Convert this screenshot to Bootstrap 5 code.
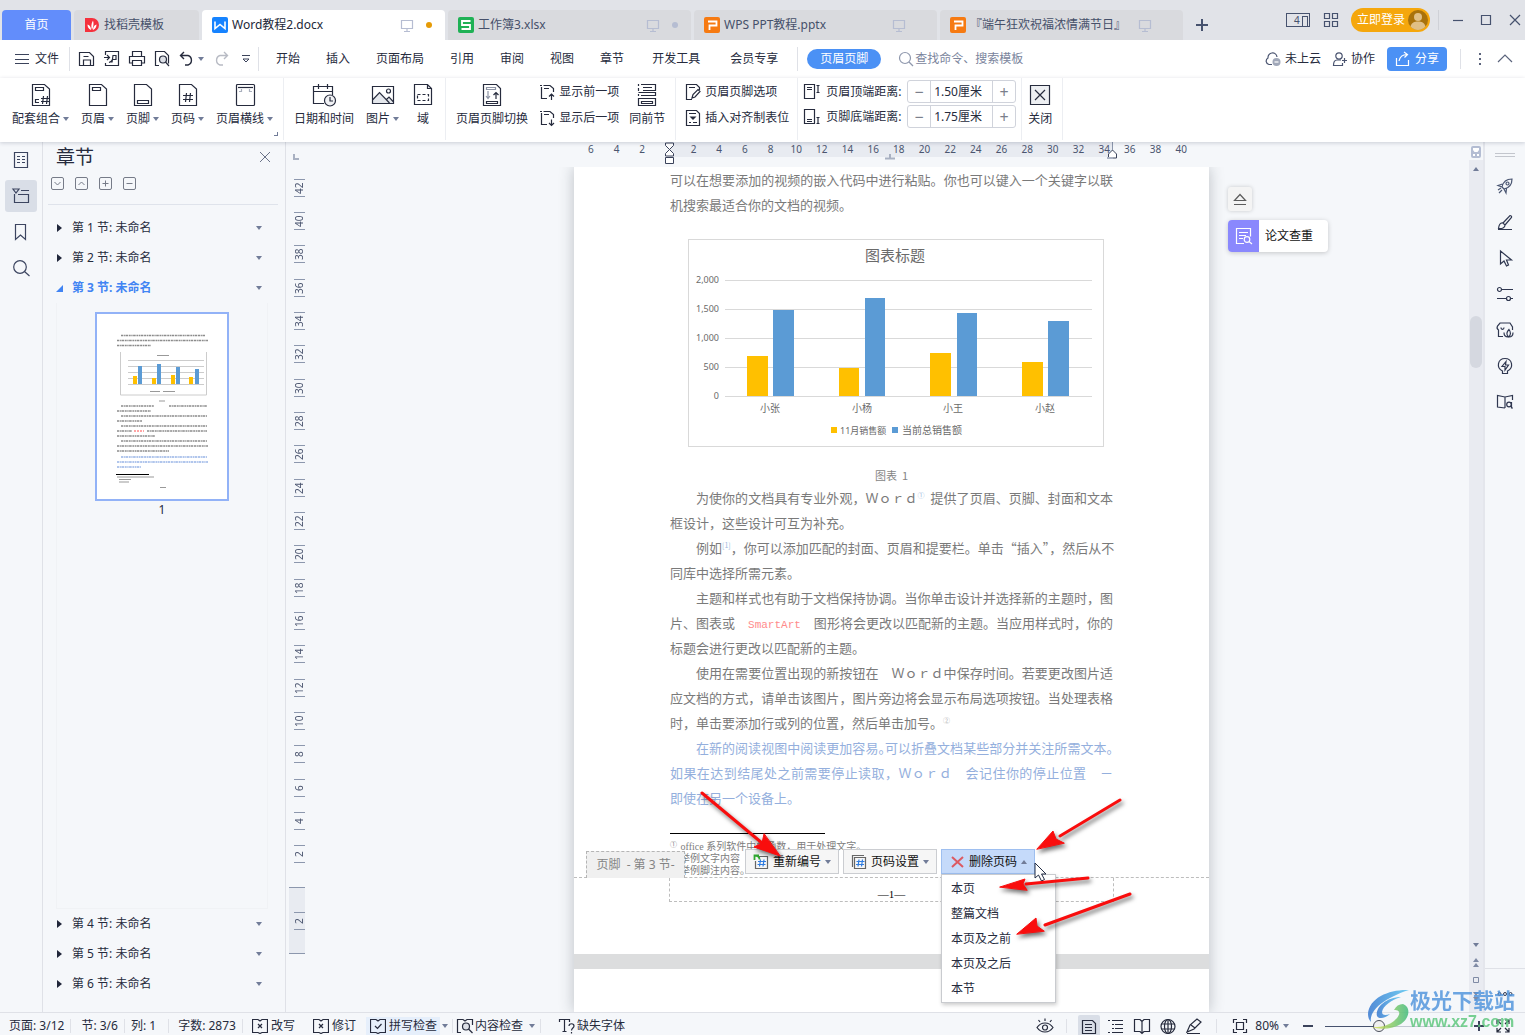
<!DOCTYPE html>
<html lang="zh-CN">
<head>
<meta charset="utf-8">
<meta name="viewport" content="width=device-width, initial-scale=1">
<title>Word教程2.docx</title>
<link href="https://cdn.jsdelivr.net/npm/bootstrap@5.3.0/dist/css/bootstrap.min.css" rel="stylesheet">
<style>
:root{--ink:#262b3d;--slate:#4a5672;--line:#dfe1e7;--blue:#4b91f5;--bg:#f5f7fa}
body{font-family:"Noto Sans","Noto Sans CJK SC",sans-serif;font-size:12px;line-height:18px;color:var(--ink);background:var(--bg);height:100vh;overflow:hidden}
svg{display:block;flex:none;overflow:visible}
.ic{width:16px;height:16px;fill:none;stroke:currentColor;stroke-width:1.2}
.ic24{width:24px;height:24px;fill:none;stroke:currentColor;stroke-width:1.2}
.plain{display:flex;align-items:center;padding:0;border:0;background:none;color:inherit;font-size:12px;line-height:18px;white-space:nowrap;text-decoration:none;border-radius:0}
.plain:hover{color:inherit}
.tri{width:0;height:0;border:3px solid transparent;border-top:4px solid #717c98;border-bottom:0;flex:none}
.tri-up{border-top:0;border-bottom:4px solid #717c98}
.vsep{width:1px;background:var(--line);flex:none}
/* title bar */
.titlebar{height:40px;background:#e1e3e8}
.doctab{height:30px;background:#d9dade;border-radius:4px 4px 0 0;padding:0 13px 0 10px;gap:4px;color:#46506a;width:243px}
.doctab.home{width:69px;background:#628dfb;color:#fff;justify-content:center;padding:0}
.doctab.shop{width:125px}
.doctab.current{background:#fff;color:#222738}
.doctab .ic{color:#b6bdd2}
.doctab .dot{width:6px;height:6px;border-radius:50%;margin-left:7px;background:#b6bdd2}
.doctab.current .dot{background:#e69b06}
.doctab .dot.off{visibility:hidden}
.login{height:24px;border-radius:12px;background:#f5a70c;color:#fff;padding:0 2px 0 6px;gap:3px}
/* menu row */
.menurow{height:38px;background:#fff;padding:0 12px 0 15px}
.menurow .vsep{height:24px}
.mtab{padding:0 13px}
.mtab.wide{padding:0 15px}
.mtab.pill{height:20px;border-radius:10px;background:var(--blue);color:#fff}
.find{border:0;outline:0;background:none;width:130px;padding:0;color:#7a849c;font-size:12px;line-height:18px}
.find::placeholder{color:#7a849c;opacity:1}
.share{height:24px;border-radius:4px;background:var(--blue);color:#fff;padding:0 8px;gap:4px}
/* ribbon */
.ribbon{height:64px;background:#fff;padding-left:6px;box-shadow:0 1px 4px rgba(30,40,70,.2);z-index:5;position:relative}
.ribbon .vsep{height:62px;background:#eceef2}
.rgroup{padding-right:4px}
.rgroup+.vsep+.rgroup{padding-left:4px}
.rbtn{flex-direction:column;padding:5px 6px 0;gap:3px;min-width:34px}
.rbtn .cap{display:flex;align-items:center;gap:3px}
.sbtn{padding:0 4px 0 6px;gap:5px;height:26px}
.sbtn .ic{width:14px}
.fieldlabel{width:75px;white-space:nowrap}
.spin{height:23px;width:109px;border:1px solid #d0d3db;border-radius:3px;overflow:hidden}
.spin button{width:22px;justify-content:center;font-size:16px;color:#7b7f8c}
.spin input{flex:1;min-width:0;border:0;border-left:1px solid #d0d3db;border-right:1px solid #d0d3db;font-size:12px;line-height:18px;padding:0 3px;color:var(--ink);outline:0}
.launch{width:4px;height:4px;border-right:1px solid #717c98;border-bottom:1px solid #717c98;left:274px;top:54px}
/* work area */
.rail{width:43px;border-right:1px solid var(--line);padding:2px 5px;gap:4px}
.rail .plain{width:32px;height:32px;justify-content:center;border-radius:3px;color:#3c4560}
.rail .on{background:#d9dee7}
.secpane{width:243px;border-right:1px solid var(--line)}
.secpane h2{font-size:19px;line-height:30px;margin:0;font-weight:400}
.boxbtn{width:13px;height:13px;border:1px solid #767b88;border-radius:2px;justify-content:center;color:#767b88}
.boxbtn svg{width:9px;height:9px;fill:none;stroke:currentColor}
.secrow{height:30px;padding:0 23px 0 14px;width:100%}
.secrow .mark-r{width:15px;flex:none}
.secrow .mark-r i{display:block;width:0;height:0;border:4px solid transparent;border-left:5px solid #20263a;border-right:0}
.secrow.cur{color:#4184f3;font-weight:700}
.secrow.cur .mark-r i{border:0;border-left:7px solid transparent;border-bottom:7px solid #4184f3;margin-left:-1px}
.thumbs{margin:0 17px 0 13px;border:1px solid #f0f2f5;border-top:0}
.thumb{width:134px;height:189px;border:2px solid #92b2f7;background:#fff;margin-top:9px}
.hrule{height:25px}
.hrule-in{width:635px;padding:0 15px 0 4px;display:grid;grid-template-columns:repeat(24,1fr);font-size:10px;line-height:15px;text-align:center;color:#4b556f;position:relative;height:15px}
.hrule-in span{position:relative}
.hband{position:absolute;left:96px;right:96px;top:0;height:15px;background:#e8ebf1;border-right:1px solid #8c97ad}
.hmark{position:absolute;left:0;top:0;width:100%;height:25px}
.vrule{width:28px;padding:4px 9px 0 3px}
.vnums{display:grid;grid-template-rows:repeat(21,1fr);height:700px}
.vnum{display:flex;align-items:center;justify-content:flex-end}
.vnum span{writing-mode:vertical-rl;transform:rotate(180deg);font-size:10px;line-height:11px;width:11px;height:18px;text-align:center;border-top:1px solid #8c97ad;border-bottom:1px solid #8c97ad;color:#4b556f}
.vfoot{height:67px;margin-top:16px;background:#e8ebf1;border-top:1px solid #8c97ad;border-bottom:1px solid #8c97ad}
.sheets{width:635px;box-shadow:0 0 14px rgba(40,50,60,.28)}
.sheet{height:787px;background:#fff;padding:0 96px;position:relative;overflow:visible}
.sheetgap{height:15px;background:#dcddde}
.doc{font:13px/25px "Noto Sans CJK SC",sans-serif;color:#7a7a7a;margin:0;white-space:nowrap}
.doc span{display:block}
.doc .full{text-align-last:justify}
.doc .ind{padding-left:26px}
.doc .tight{font-feature-settings:"halt"}
.doc sup{font-size:7px;line-height:0;color:#9db8dc;top:-5px}
.doc sup.grey{color:#b5b5b5}
.doc em{font:11px "Liberation Mono",monospace;color:#ff8b8b}
.doc.bluepar{color:#94afdd}
.chartbox{width:416px;height:208px;border:1px solid #d9d9d9;margin:22px 0 0 18px}
.chartbox text{font-family:"Noto Sans","Noto Sans CJK SC",sans-serif;fill:#6a6a6a;font-size:9px}
.figcap{font:11px/20px "Noto Sans CJK SC",sans-serif;color:#858585;text-align:center;margin:18px 0 0}
.fnotes{font:10px/12px "Liberation Serif","Noto Sans CJK SC",serif;color:#7d7d7d;white-space:nowrap}
.fnotes hr{width:155px;margin:23px 0 5px;border-top:1px solid #000;opacity:1}
.fnotes .fmark{font-size:7px;vertical-align:3px;padding-right:1px}
.fnotes .fcont{padding-left:10px}
.footzone{position:absolute;left:0;right:0;top:710px;border-top:1px dashed #bdbdbd}
.footbox{margin:0 95px;height:24px;border:1px dashed #bdbdbd;border-top:0;font:11px/33px "Liberation Serif",serif;color:#000;text-align:center}
.foottag{position:absolute;left:12px;bottom:0;width:99px;height:27px;background:#f0f0f0;border:1px dashed #b5b5b5;border-bottom:0;color:#848484;line-height:26px;text-align:center;white-space:pre}
.foottools{position:absolute;left:171px;bottom:4px;gap:4px}
.foottools .ftb{width:94px;height:25px;background:#f6f6f6;border:1px solid #cbcdd1;padding:0 7px;gap:4px;color:#111;border-radius:0}
.foottools .ftb.open{background:#c5dafa;border-color:#9ebff0}
.pmenu{position:absolute;display:block;left:196px;top:25px;min-width:0;width:115px;padding:1px 0;margin:0;border:1px solid #c9cbcf;border-radius:0;box-shadow:1px 2px 4px rgba(0,0,0,.2);font-size:12px;z-index:2}
.pmenu .dropdown-item{padding:0 9px;line-height:25px;color:var(--ink)}
.overlay{position:absolute;left:0;top:0;width:100%;height:100%;z-index:4;pointer-events:none}
.floaters{position:absolute;right:141px;top:45px;width:100px;gap:9px}
.eject{width:24px;height:24px;background:#f4f4f4;border-radius:3px;box-shadow:0 0 4px rgba(0,0,0,.18);justify-content:center;color:#5c5c5c}
.paper{height:32px;background:#fff;border-radius:4px;box-shadow:0 1px 5px rgba(0,0,0,.2);color:#111;overflow:hidden;gap:6px}
.paper b{width:31px;height:32px;background:#8a88fd;color:#fff;display:flex;align-items:center;justify-content:center}
.sbar{width:16px;border-right:2px solid #e4e6ec}
.sbar .track{background:#e9ebf1;flex:1;position:relative}
.sbar .knob{position:absolute;top:156px;left:1px;right:1px;height:52px;border-radius:6px;background:#d5d8e0}
.toolrail{width:40px}
.toolrail .plain{height:36px;justify-content:center;color:#2f3750}
/* status bar */
.status{height:23px;border-top:1px solid var(--line);padding:4px 14px 0 9px}
.status .vsep{height:14px}
.status .chk{background:#e6effb;padding:0 3px 0 4px}
.status .sel{background:#d9dee7;border-radius:2px;padding:0 3px;height:24px;margin-top:1px}
.zoomer{appearance:none;-webkit-appearance:none;width:137px;height:16px;background:linear-gradient(90deg,#46526e 40%,#c3c8d3 40%) center/100% 1px no-repeat;margin:0}
.zoomer::-webkit-slider-thumb{-webkit-appearance:none;width:12px;height:12px;border-radius:50%;border:1px solid #4b4f5c;background:#f0f0f0}
.wmark{position:fixed;right:10px;bottom:4px;z-index:9;opacity:.82;pointer-events:none}
.wmark .w1{font-size:21px;line-height:25px;font-weight:700;color:#4f93dc}
.wmark .w2{font:700 16px/18px "Liberation Sans",sans-serif;color:#5cc67c}
</style>
<script src="https://cdn.jsdelivr.net/npm/bootstrap@5.3.0/dist/js/bootstrap.bundle.min.js"></script>
</head>
<body class="d-flex flex-column">
<svg width="0" height="0" class="position-absolute" aria-hidden="true">
<symbol id="mon" viewBox="0 0 16 16"><path d="M2.500 3.500h11v8h-11zM8 11.500v3M5 14.500h6"/></symbol>
<symbol id="pgh" viewBox="0 0 24 24"><path d="M3.500 1.500h12l5 4.500v16.500h-17zM6.500 4.500h8v3h-8z"/></symbol>
<symbol id="wI" viewBox="0 0 16 16"><rect width="16" height="16" rx="2" fill="#1683ff" stroke="none"/><path d="M3 4.500v7l5-4 5 4v-7" stroke="#fff" stroke-width="1.600"/></symbol>
<symbol id="pI" viewBox="0 0 16 16"><rect width="16" height="16" rx="2" fill="#f67a12" stroke="none"/><path d="M4 4.500h8.500v4H5.500V13" stroke="#fff" stroke-width="1.800"/></symbol>
<symbol id="chkbox" viewBox="0 0 16 16"><path d="M6 1.500H.5v13H6l2 1 2-1h5.500v-13H10L8 3 6 1.500"/></symbol>
</svg>

<header class="titlebar d-flex align-items-center flex-shrink-0">
  <nav class="d-flex align-self-end align-items-center" style="gap:3px;padding-left:2px">
    <a href="#" class="plain doctab home">首页</a>
    <a href="#" class="plain doctab shop"><svg class="ic" viewBox="0 0 16 16"><path d="M1 1h7a7 7 0 0 1 0 14H1z" fill="#f5313d" stroke="none"/><path d="M8 13C7 10 7 7 9 3.500c1 3 .5 6-1 9.500zM7 13C4.500 12 3.500 10 3.500 7.500 6 8.500 7 10 7 13zM9 13c0-3 1-4.500 3.500-5.500 0 2.500-1 4.500-3.500 5.500z" fill="#fff" stroke="none"/></svg>找稻壳模板</a>
    <a href="#" class="plain doctab current"><svg class="ic"><use href="#wI"/></svg><span class="flex-grow-1">Word教程2.docx</span><svg class="ic"><use href="#mon"/></svg><span class="dot"></span></a>
    <a href="#" class="plain doctab"><svg class="ic" viewBox="0 0 16 16"><rect width="16" height="16" rx="2" fill="#1fb155" stroke="none"/><path d="M12.500 4H4v4h8v4H3.500" stroke="#fff" stroke-width="1.800"/></svg><span class="flex-grow-1">工作簿3.xlsx</span><svg class="ic"><use href="#mon"/></svg><span class="dot"></span></a>
    <a href="#" class="plain doctab"><svg class="ic"><use href="#pI"/></svg><span class="flex-grow-1">WPS PPT教程.pptx</span><svg class="ic"><use href="#mon"/></svg><span class="dot off"></span></a>
    <a href="#" class="plain doctab"><svg class="ic"><use href="#pI"/></svg><span class="flex-grow-1">『端午狂欢祝福浓情满节日』</span><svg class="ic"><use href="#mon"/></svg><span class="dot off"></span></a>
    <button class="plain ms-2" aria-label="新建" style="color:#46526e"><svg class="ic" viewBox="0 0 16 16"><path d="M8 2v12M2 8h12" stroke-width="2"/></svg></button>
  </nav>
  <div class="d-flex align-items-center ms-auto" style="padding-right:2px;color:#46526e">
    <button class="plain" aria-label="视图"><svg width="25" height="15" fill="none" stroke="#46526e"><rect x=".5" y=".5" width="23" height="13"/><rect x="16.500" y="3.500" width="5" height="10"/><text x="8" y="11" font-size="10" fill="#46526e" stroke="none">4</text></svg></button>
    <button class="plain" style="margin-left:12px" aria-label="应用"><svg class="ic" viewBox="0 0 16 16"><path d="M1.500 1.500h5v5h-5zM9.500 1.500h5v5h-5zM1.500 9.500h5v5h-5zM9.500 9.500h5v5h-5z"/></svg></button>
    <button class="plain login" style="margin-left:12px">立即登录<svg width="20" height="20" viewBox="0 0 20 20"><circle cx="10" cy="10" r="10" fill="#a9720b"/><circle cx="10" cy="7" r="4" fill="#e0bf85"/><path d="M2.500 16.500c1-4 4-5 7.500-5s6.500 1 7.500 5A10 10 0 0 1 2.500 16.500z" fill="#e0bf85"/></svg></button>
    <span class="vsep" style="height:20px;margin:0 11px 0 8px;background:#cfd1d7"></span>
    <button class="plain" aria-label="最小化"><svg class="ic" viewBox="0 0 16 16"><path d="M3 8.500h10"/></svg></button>
    <button class="plain" style="margin-left:12px" aria-label="最大化"><svg class="ic" viewBox="0 0 16 16"><path d="M3.500 3.500h9v9h-9z"/></svg></button>
    <button class="plain" style="margin-left:13px" aria-label="关闭窗口"><svg class="ic" viewBox="0 0 16 16"><path d="M3 3l10 10M13 3L3 13"/></svg></button>
  </div>
</header>

<div class="menurow d-flex align-items-center flex-shrink-0">
  <button class="plain" style="gap:6px"><svg width="14" height="14" stroke="#3b435b"><path d="M0 2.500h14M0 7.500h14M0 11.500h14"/></svg>文件</button>
  <span class="vsep" style="margin:0 9px 0 10px"></span>
  <div class="d-flex align-items-center" style="gap:9px">
    <button class="plain" aria-label="保存"><svg class="ic" viewBox="0 0 16 16"><path d="M.5 1.500h10l4 4v9H.5zM4.500 14v-5h7v5M4.500 5.500h5"/></svg></button>
    <button class="plain" aria-label="输出PDF"><svg class="ic" viewBox="0 0 16 16"><path d="M1.500 4V.5h13v14h-13V12M0 6.500h5M3 4l2.500 2.500L3 9M8 11.500l1-7h3v4H8.500C8 10 6.500 11 5 11.500"/></svg></button>
    <button class="plain" aria-label="打印"><svg class="ic" viewBox="0 0 16 16"><path d="M3.500 5V.5h9V5M3.500 12h-3V5.500h15V12h-3M3.500 9.500h9v5h-9z"/></svg></button>
    <button class="plain" aria-label="打印预览"><svg class="ic" viewBox="0 0 16 16"><path d="M5 14.500H1.500V.5h9l4 4v8"/><circle cx="9" cy="8.500" r="3.500" fill="#dcdfe6"/><path d="M11.500 11l3.500 4"/></svg></button>
    <button class="plain" style="gap:3px" aria-label="撤销"><svg class="ic" viewBox="0 0 16 16"><path d="M5 1L1.500 4.500 5 8M2 4.500h7a5 5 0 0 1 0 9.500H6" stroke-width="1.400"/></svg><i class="tri"></i></button>
    <button class="plain" aria-label="恢复" style="color:#b8bbc4"><svg class="ic" viewBox="0 0 16 16"><path d="M11 1l3.500 3.500L11 8M14 4.500H7A5 5 0 0 0 7 14h3" stroke-width="1.400"/></svg></button>
    <button class="plain ms-1" aria-label="更多"><svg width="8" height="8" fill="none" stroke="#3b435b"><path d="M0 .5h8M1 4l3 3 3-3z"/></svg></button>
  </div>
  <span class="vsep" style="margin:0 4px 0 8px"></span>
  <nav class="d-flex align-items-center">
    <a href="#" class="plain mtab">开始</a><a href="#" class="plain mtab">插入</a><a href="#" class="plain mtab">页面布局</a><a href="#" class="plain mtab">引用</a><a href="#" class="plain mtab">审阅</a><a href="#" class="plain mtab">视图</a><a href="#" class="plain mtab">章节</a><a href="#" class="plain mtab wide">开发工具</a><a href="#" class="plain mtab wide">会员专享</a>
    <span class="vsep" style="margin:0 9px 0 4px"></span>
    <a href="#" class="plain mtab pill">页眉页脚</a>
  </nav>
  <label class="d-flex align-items-center" style="margin-left:17px;gap:1px;color:#8f98ad"><svg class="ic" viewBox="0 0 16 16"><circle cx="7" cy="7" r="5.500"/><path d="M11 11l4 4"/></svg><input class="find" placeholder="查找命令、搜索模板" aria-label="查找命令"></label>
  <div class="d-flex align-items-center ms-auto">
    <button class="plain" style="gap:4px"><svg class="ic" viewBox="0 0 16 16" style="color:#4a5470"><path d="M7 13.500H4A3.500 3.500 0 0 1 3 7 4.500 4.500 0 0 1 12 6"/><circle cx="11.500" cy="11" r="4" fill="#a1a8b9" stroke="none"/><path d="M9.500 11h4" stroke="#fff"/></svg>未上云</button>
    <button class="plain" style="gap:3px;margin-left:11px"><svg class="ic" viewBox="0 0 16 16" style="color:#4a5470"><circle cx="7" cy="5" r="3.200"/><path d="M9 9H5c-2 0-3.500 1.500-3.500 5.500h9V12M10 9.500h5M12.500 7v5"/></svg>协作</button>
    <button class="plain share" style="margin-left:12px"><svg class="ic" viewBox="0 0 16 16"><path d="M1.500 7v7.500h12V9M4 10c1-5 4-6.500 8-6.500M9 1l3.500 2.500L9.500 6.500"/></svg>分享</button>
    <span class="vsep" style="margin:0 17px 0 13px;height:20px"></span>
    <button class="plain" aria-label="选项"><svg width="4" height="14" fill="#5b647c"><path d="M1 1h2v2H1zM1 6h2v2H1zM1 11h2v2H1z"/></svg></button>
    <button class="plain" style="margin-left:15px" aria-label="折叠功能区"><svg class="ic" viewBox="0 0 16 16"><path d="M1 11l7-7 7 7" stroke="#5b647c"/></svg></button>
  </div>
</div>

<div class="ribbon d-flex flex-shrink-0">
  <div class="rgroup d-flex">
    <button class="plain rbtn"><svg class="ic24" viewBox="0 0 24 24"><path d="M3.500 1.500h12l5 4.500v16.500h-17zM6.500 4.500h8v3h-8zM10 16.500H6.500v3H10M12 15.500h8M12 18.500h8M14.500 13l-1 8M18.500 13l-1 8"/></svg><span class="cap">配套组合<i class="tri"></i></span></button>
    <button class="plain rbtn"><svg class="ic24"><use href="#pgh"/></svg><span class="cap">页眉<i class="tri"></i></span></button>
    <button class="plain rbtn"><svg class="ic24" viewBox="0 0 24 24"><path d="M3.500 1.500h12l5 4.500v16.500h-17zM6.500 17.500h11v3h-11z"/></svg><span class="cap">页脚<i class="tri"></i></span></button>
    <button class="plain rbtn"><svg class="ic24" viewBox="0 0 24 24"><path d="M3.500 1.500h12l5 4.500v16.500h-17zM7 12.500h10M7 16.500h10M10.500 10l-1 9M14.500 10l-1 9"/></svg><span class="cap">页码<i class="tri"></i></span></button>
    <button class="plain rbtn"><svg class="ic24" viewBox="0 0 24 24"><rect x="3.500" y="1.500" width="18" height="21" rx="1"/><path d="M5 4.500h15"/><path d="M6 8.500h2.500V6M19 8.500h-2.500V6" stroke="#a9afbd"/></svg><span class="cap">页眉横线<i class="tri"></i></span></button>
    <span class="launch position-absolute"></span>
  </div>
  <span class="vsep"></span>
  <div class="rgroup d-flex">
    <button class="plain rbtn"><svg class="ic24" viewBox="0 0 24 24"><path d="M12 20.500H1.500v-17h19V12M1.500 8.500h19M6.500 1v5M15.500 1v5"/><circle cx="18" cy="17.500" r="5.500" fill="#f1f2f5"/><path d="M18 14v4h3"/></svg><span>日期和时间</span></button>
    <button class="plain rbtn"><svg class="ic24" viewBox="0 0 24 24"><path d="M1.500 18l7-8 7 8 2.500-3 4.500 5.500h-21z" fill="#e4e7ec" stroke="none"/><path d="M1.500 3.500h21v17h-21zM1.500 17l7-7.500 10 10.500M15.500 16.500l2.500-2.500 4.500 5"/><circle cx="17.500" cy="8" r="2"/></svg><span class="cap">图片<i class="tri"></i></span></button>
    <button class="plain rbtn"><svg class="ic24" viewBox="0 0 24 24"><path d="M3.500 1.500h13l4 4v16h-17zM16.500 1.500v4h4"/><path d="M6.500 11.500h11v6h-11z" stroke-dasharray="3 2"/></svg><span>域</span></button>
  </div>
  <span class="vsep"></span>
  <div class="rgroup d-flex">
    <button class="plain rbtn"><svg class="ic24" viewBox="0 0 24 24"><path d="M3.500 1.500h13l4 4v17h-17zM6.500 18.500h11v2h-11z"/><path d="M6.500 4.500h9v2h-9zM8 8v7M6 13l2 2.500 2-2.500" stroke="#8e95a6"/><path d="M16 16V9.500M13.500 12L16 9.500l2.500 2.500"/></svg><span>页眉页脚切换</span></button>
    <div class="d-flex flex-column">
      <button class="plain sbtn" style="margin-top:1px"><svg class="ic" viewBox="0 0 14 16"><path d="M3.500 1.500H10l3.500 3V8M1.500 3v11.500H7M0 1.500h2M4 4.500h5M11.500 16v-6M9 12.500l2.500-2.500 2.500 2.500"/></svg>显示前一项</button>
      <button class="plain sbtn"><svg class="ic" viewBox="0 0 14 16"><path d="M3.500 1.500H10l3.500 3V8M1.500 3v11.500H7M0 1.500h2M4 4.500h5M11.500 9.500v6M9 13l2.500 2.500L14 13"/></svg>显示后一项</button>
    </div>
    <button class="plain rbtn"><svg class="ic24" viewBox="0 0 24 24"><path d="M6 1.500h14.500v6H8M3.500 1v2M3.500 5v3M8 4.500h9M3.500 9.500h17v3H6M3.500 11v2M3.500 15.500h17v7h-17zM6.500 18.500h11v2h-11z"/></svg><span>同前节</span></button>
  </div>
  <span class="vsep"></span>
  <div class="rgroup d-flex flex-column">
    <button class="plain sbtn" style="margin-top:1px"><svg class="ic" viewBox="0 0 14 16"><path d="M6 15.500H.5V.5h10l3 3V6M3 3.500h6M6 14l1-3.500 5-5 2 2-5 5.500z"/></svg>页眉页脚选项</button>
    <button class="plain sbtn"><svg class="ic" viewBox="0 0 14 16"><path d="M.5.5h10l3 3v12H.5zM3 3.500h7M3 12.500h2M7 12.500h4"/><path d="M3.500 6.500h7L7 10z" fill="currentColor" stroke="none"/></svg>插入对齐制表位</button>
  </div>
  <span class="vsep"></span>
  <div class="d-flex flex-column" style="padding:2px 5px 0 6px;gap:2px">
    <div class="d-flex align-items-center" style="gap:6px"><svg class="ic" viewBox="0 0 16 16"><path d="M.5.5h10v14H.5zM3 3.500h5M3 5.500h5M12.500 1.500h3M14 1.500v7M12.500 8.500h3"/></svg><label for="hd" class="fieldlabel">页眉顶端距离:</label><div class="spin d-flex"><button class="plain" aria-label="减">−</button><input id="hd" value="1.50厘米"><button class="plain" aria-label="加">+</button></div></div>
    <div class="d-flex align-items-center" style="gap:6px"><svg class="ic" viewBox="0 0 16 16"><path d="M.5.5h10v14H.5zM3 10.500h5M3 12.500h5M12.500 8.500h3M14 8.500v6M12.500 14.500h3"/></svg><label for="fd" class="fieldlabel">页脚底端距离:</label><div class="spin d-flex"><button class="plain" aria-label="减">−</button><input id="fd" value="1.75厘米"><button class="plain" aria-label="加">+</button></div></div>
  </div>
  <span class="vsep"></span>
  <div class="rgroup d-flex"><button class="plain rbtn"><svg class="ic24" viewBox="0 0 24 24"><path d="M2.500 2.500h19v19h-19z" fill="#edeff2"/><path d="M7 7l10 10M17 7L7 17"/></svg><span>关闭</span></button></div>
  <span class="vsep"></span>
</div>

<main class="d-flex flex-grow-1" style="min-height:0">
  <nav class="rail d-flex flex-column">
    <button class="plain" aria-label="目录"><svg class="ic" viewBox="0 0 16 16"><path d="M1.500.5h13v15h-13zM4 4.500h3M9 4.500h3M4 7.500h3M9 7.500h3M4 10.500h3M9 10.500h3"/></svg></button>
    <button class="plain on" aria-label="章节"><svg class="ic" viewBox="0 0 16 16"><path d="M0 1h6L3 5zM8 2.500h8M1.500 6v8.500h14v-8H5"/></svg></button>
    <button class="plain" aria-label="书签"><svg class="ic" viewBox="0 0 16 16"><path d="M2.500.5h10v15l-5-4.500-5 4.500z"/></svg></button>
    <button class="plain" aria-label="查找"><svg class="ic" viewBox="0 0 16 16"><circle cx="7" cy="7" r="6.300"/><path d="M11.500 11.500l5 4.500"/></svg></button>
  </nav>
  <aside class="secpane d-flex flex-column">
    <div class="d-flex align-items-center justify-content-between" style="padding:0 14px 0 13px"><h2>章节</h2><button class="plain" aria-label="关闭窗格"><svg width="12" height="12" stroke="#6b7389"><path d="M1 1l10 10M11 1L1 11"/></svg></button></div>
    <div class="d-flex" style="gap:11px;padding:5px 0 14px 8px">
      <button class="plain boxbtn" aria-label="展开"><svg><path d="M1.500 3l3 3 3-3"/></svg></button>
      <button class="plain boxbtn" aria-label="收起"><svg><path d="M1.500 6l3-3 3 3"/></svg></button>
      <button class="plain boxbtn" aria-label="新增"><svg><path d="M1.500 4.500h6M4.500 1.500v6"/></svg></button>
      <button class="plain boxbtn" aria-label="删除"><svg><path d="M1.500 4.500h6"/></svg></button>
    </div>
    <div style="border-top:1px solid #dfe3eb;margin:0 7px 8px 5px"></div>
    <button class="plain secrow"><span class="mark-r"><i></i></span>第 1 节: 未命名<i class="tri ms-auto"></i></button>
    <button class="plain secrow"><span class="mark-r"><i></i></span>第 2 节: 未命名<i class="tri ms-auto"></i></button>
    <button class="plain secrow cur"><span class="mark-r"><i></i></span>第 3 节: 未命名<i class="tri ms-auto"></i></button>
    <div class="thumbs flex-grow-1 d-flex flex-column align-items-center">
      <div class="thumb"><svg width="130" height="185" fill="none" stroke-width="1.600">
        <g stroke="#8c8c8c" stroke-dasharray="2 .6 1.300 .5 2.600 .7"><path d="M24 21.500h84M20 26.500h91M20 31.500h34M24 92h33M72 92h38M20 97h34M24 102h86M20 107h25M24 112h86M20 117h15M50 117h60M20 122h38M24 127h86M20 132h91M20 137h52"/></g>
        <g stroke="#98b4e6" stroke-dasharray="2 .6 1.300 .5 2.600 .7"><path d="M24 143h86M20 148h91M20 153h24"/></g>
        <path d="M37 117h10" stroke="#f88" stroke-dasharray="2 1"/>
        <path d="M23.500 38v43h86V38M31 46.500h76M31 52.500h76M31 58.500h76M31 64.500h76M31 70.500h76" stroke="#ccc" stroke-width="1"/>
        <path d="M36 62h4v8h-4zM55 64h4v6h-4zM74 61h4v9h-4zM92 63h4v7h-4z" fill="#ffc000"/><path d="M41 52h4v18h-4zM60 50h4v20h-4zM79 53h4v17h-4zM98 55h4v15h-4z" fill="#5b9bd5"/>
        <path d="M60 41.500h12M53 77.500h10M66 77.500h12M62 87h6M20 163h37M22 165.500h12M22 168h10M63 173.500h6" stroke="#999" stroke-width="1"/><path d="M19 160.500h33" stroke="#000" stroke-width="1"/></svg></div>
      <span>1</span>
    </div>
    <button class="plain secrow"><span class="mark-r"><i></i></span>第 4 节: 未命名<i class="tri ms-auto"></i></button>
    <button class="plain secrow"><span class="mark-r"><i></i></span>第 5 节: 未命名<i class="tri ms-auto"></i></button>
    <button class="plain secrow" style="margin-bottom:13px"><span class="mark-r"><i></i></span>第 6 节: 未命名<i class="tri ms-auto"></i></button>
  </aside>

  <section class="flex-grow-1 d-flex flex-column position-relative" style="min-width:0">
    <div class="hrule d-flex flex-shrink-0">
      <div style="width:28px;padding:12px 0 0 7px"><svg width="6" height="6"><path d="M1 0v5h5" fill="none" stroke="#a9b1c2" stroke-width="2"/></svg></div>
      <div class="flex-grow-1 d-flex justify-content-center"><div class="hrule-in"><i class="hband"></i><span>6</span><span>4</span><span>2</span><span></span><span>2</span><span>4</span><span>6</span><span>8</span><span>10</span><span>12</span><span>14</span><span>16</span><span>18</span><span>20</span><span>22</span><span>24</span><span>26</span><span>28</span><span>30</span><span>32</span><span>34</span><span>36</span><span>38</span><span>40</span>
        <svg class="hmark" fill="#fff" stroke="#3b435b"><path d="M91.500 1h8v2.500l-4 4-4-4zM95.500 7.500l4 4V14h-8v-2.500zM91.500 15.500h8v6h-8zM538.500 8l4 4v4h-8v-4z"/><path d="M311 16.500h10M316 12v4M533 16h6" stroke="#a9b1c2" stroke-width="2"/></svg></div></div>
    </div>
    <div class="d-flex flex-grow-1 overflow-hidden">
      <div class="vrule flex-shrink-0">
        <div class="vnums"><div class="vnum"><span>42</span></div><div class="vnum"><span>40</span></div><div class="vnum"><span>38</span></div><div class="vnum"><span>36</span></div><div class="vnum"><span>34</span></div><div class="vnum"><span>32</span></div><div class="vnum"><span>30</span></div><div class="vnum"><span>28</span></div><div class="vnum"><span>26</span></div><div class="vnum"><span>24</span></div><div class="vnum"><span>22</span></div><div class="vnum"><span>20</span></div><div class="vnum"><span>18</span></div><div class="vnum"><span>16</span></div><div class="vnum"><span>14</span></div><div class="vnum"><span>12</span></div><div class="vnum"><span>10</span></div><div class="vnum"><span>8</span></div><div class="vnum"><span>6</span></div><div class="vnum"><span>4</span></div><div class="vnum"><span>2</span></div></div>
        <div class="vfoot vnum"><span>2</span></div>
      </div>
      <div class="flex-grow-1 d-flex justify-content-center">
        <div class="sheets">
          <article class="sheet">
            <p class="doc"><span class="full">可以在想要添加的视频的嵌入代码中进行粘贴。你也可以键入一个关键字以联</span><span>机搜索最适合你的文档的视频。</span></p>
            <div class="chartbox"><svg width="414" height="206" role="img" aria-label="图表标题">
              <path d="M36 40.500h367M36 69.500h367M36 98.500h367M36 127.500h367M36 156.500h367" stroke="#d9d9d9"/>
              <path d="M58 116h21v40H58zM150 128h20v28h-20zM241 113h21v43h-21zM333 122h21v34h-21z" fill="#ffc000"/>
              <path d="M84 70h21v86H84zM176 58h20v98h-20zM268 73h20v83h-20zM359 81h21v75h-21z" fill="#5b9bd5"/>
              <text x="206" y="21" text-anchor="middle" style="font-size:15px">图表标题</text>
              <g text-anchor="end"><text x="30" y="43">2,000</text><text x="30" y="72">1,500</text><text x="30" y="101">1,000</text><text x="30" y="130">500</text><text x="30" y="159">0</text></g>
              <g text-anchor="middle"><text x="81" y="172" style="font-size:10px">小张</text><text x="173" y="172" style="font-size:10px">小杨</text><text x="264" y="172" style="font-size:10px">小王</text><text x="356" y="172" style="font-size:10px">小赵</text></g>
              <path d="M142 187h6v6h-6z" fill="#ffc000"/><text x="151" y="194">11月销售额</text><path d="M203 187h6v6h-6z" fill="#5b9bd5"/><text x="213" y="194" style="font-size:10px">当前总销售额</text>
            </svg></div>
            <p class="figcap">图表&nbsp; 1</p>
            <p class="doc"><span class="full ind">为使你的文档具有专业外观，Ｗｏｒｄ<sup>①</sup>&nbsp;&nbsp;提供了页眉、页脚、封面和文本</span><span>框设计，这些设计可互为补充。</span></p>
            <p class="doc"><span class="full ind">例如<sup>[1]</sup>，你可以添加匹配的封面、页眉和提要栏。单击“插入”，然后从不</span><span>同库中选择所需元素。</span></p>
            <p class="doc"><span class="full ind">主题和样式也有助于文档保持协调。当你单击设计并选择新的主题时，图</span><span class="full">片、图表或　<em>SmartArt</em>　图形将会更改以匹配新的主题。当应用样式时，你的</span><span>标题会进行更改以匹配新的主题。</span></p>
            <p class="doc"><span class="full ind">使用在需要位置出现的新按钮在　Ｗｏｒｄ中保存时间。若要更改图片适</span><span class="full">应文档的方式，请单击该图片，图片旁边将会显示布局选项按钮。当处理表格</span><span>时，单击要添加行或列的位置，然后单击加号。<sup class="grey">②</sup></span></p>
            <p class="doc bluepar"><span class="full ind tight">在新的阅读视图中阅读更加容易。可以折叠文档某些部分并关注所需文本。</span><span class="full">如果在达到结尾处之前需要停止读取，Ｗｏｒｄ　会记住你的停止位置　－</span><span>即使在另一个设备上。</span></p>
            <div class="fnotes"><hr>
              <div><span class="fmark">①</span> office 系列软件中的函数，用于处理文字。</div>
              <div class="fcont">举例文字内容</div><div class="fcont">举例脚注内容。</div>
            </div>
            <footer class="footzone">
              <div class="footbox">—1—</div>
              <div class="position-absolute w-100" style="left:0;top:0"><div class="foottag">页脚  - 第 3 节-</div>
              <div class="foottools d-flex">
                <button class="plain ftb"><svg class="ic" viewBox="0 0 16 16"><path d="M5 2.500h9.500v12h-12V7" stroke="#666"/><path d="M5 7.500h8M4.500 10.500h8M7.500 5.500l-1 7M11 5.500l-1 7" stroke="#2f7ce0"/><path d="M1.500 6V1.500H6M1.500 1.500c3 0 5 1 5 4" stroke="#30a830" stroke-width="1.800"/></svg>重新编号<i class="tri ms-auto"></i></button>
                <button class="plain ftb"><svg class="ic" viewBox="0 0 16 16"><path d="M1.500 13V1.500H13M3.500 3.500h11v11h-11z" stroke="#666"/><path d="M5.500 7.500h8M5 10.500h8M8 5.500l-1 7M11.500 5.500l-1 7" stroke="#2f7ce0"/></svg>页码设置<i class="tri ms-auto"></i></button>
                <button class="plain ftb open"><svg class="ic" viewBox="0 0 16 16"><path d="M3 3l11 10M14 3L3 13" stroke="#dc5a62" stroke-width="2"/></svg>删除页码<i class="tri tri-up ms-auto"></i></button>
                <div class="dropdown-menu show pmenu"><a class="dropdown-item" href="#">本页</a><a class="dropdown-item" href="#">整篇文档</a><a class="dropdown-item" href="#">本页及之前</a><a class="dropdown-item" href="#">本页及之后</a><a class="dropdown-item" href="#">本节</a></div>
              </div></div>
            </footer>
            <svg class="overlay" viewBox="574 167 635 787" preserveAspectRatio="xMinYMin">
              <path d="M1035 863v15l3.500-3 3 6 3-1.500-3-5.500h4.500z" fill="#fff" stroke="#222c45"/>
              <g style="filter:drop-shadow(2px 3px 2px rgba(0,0,0,.55))" stroke="#f90d0d" fill="#f90d0d" stroke-width="3" stroke-linecap="round">
                <path d="M702 793l60 50M1120 800l-60 36M1088 878l-62 6M1130 894l-85 31"/>
                <path d="M780 856l-26-9 8-4 2-9zM1037 849l16-18 3 8 8 4zM1000 887l25-8-2 5 4 6zM1017 934l19-16 1 8 7 5z" stroke-width="1"/>
              </g>
            </svg>
          </article>
          <div class="sheetgap"></div>
          <div class="sheet"></div>
        </div>
      </div>
    </div>
    <div class="floaters d-flex flex-column">
      <button class="plain eject" aria-label="收起"><svg class="ic" viewBox="0 0 16 16"><path d="M2.500 9.500L8 3.500l5.500 6zM2 13.500h12"/></svg></button>
      <button class="plain paper"><b><svg class="ic" viewBox="0 0 16 16"><path d="M8 15.500H.5V.5h14v8M3 4.500h9M3 7.500h7M3 10.500h4"/><circle cx="11" cy="11.500" r="2.800"/><path d="M13 13.500l3 2.500"/></svg></b>论文查重</button>
    </div>
  </section>

  <div class="sbar d-flex flex-column">
    <svg width="14" height="18"><rect x="2" y="4" width="10" height="12" rx="2" fill="#b4bdd3"/><path d="M4 6h6v2l-1.500 2h-3L4 8zM4 12h2v2H4zM8 12h2v2H8z" fill="#fff"/></svg>
    <div class="track d-flex flex-column align-items-center">
      <i class="tri tri-up" style="margin-top:7px"></i><span class="knob"></span>
      <i class="tri mt-auto"></i>
      <svg width="8" height="55" style="margin-top:10px" fill="#7f8aa4"><path d="M1 5l3-4 3 4zM1 10l3-4 3 4zM1 35h6l-3 4zM1 40h6l-3 4z"/><path d="M1.500 20.500h5v5h-5z" fill="none" stroke="#7f8aa4"/></svg>
    </div>
  </div>

  <aside class="toolrail d-flex flex-column">
    <svg width="20" height="4" style="margin:11px auto 11px" stroke="#c3c6cd"><path d="M0 .5h20M0 3.500h20"/></svg>
    <button class="plain" aria-label="快捷"><svg class="ic" viewBox="0 0 16 16"><path d="M5 9c1-5 4-8 10-8 0 6-3 9-8 10zM5.500 6L1 7.500 5 9M9.500 10.500L9 15l-2-4M4 10l-3 2M5 12l-3 3" stroke="#4a5672"/><circle cx="10.500" cy="5.500" r="1.500" stroke="#4a5672"/></svg></button>
    <button class="plain" aria-label="样式"><svg class="ic" viewBox="0 0 16 16"><path d="M6 9L13 1.500c1 0 2 1 1.500 2L8 11M6 9c-3-.5-4 2-4.500 5.500C5 15 8 14 8 11zM1 15.500h14"/></svg></button>
    <button class="plain" aria-label="选择"><svg class="ic" viewBox="0 0 16 16"><path d="M3.500 1v13l3.500-3 2.500 5 2-1-2-5h5z"/></svg></button>
    <button class="plain" aria-label="属性"><svg class="ic" viewBox="0 0 16 16"><circle cx="2.500" cy="3.500" r="2"/><path d="M4.500 3.500H16M0 12.500h9.500M13.500 12.500H16"/><circle cx="11.500" cy="12.500" r="2"/></svg></button>
    <button class="plain" aria-label="素材"><svg class="ic" viewBox="0 0 16 16"><path d="M6 14.500H1.500V8C0 7 0 5 .5 4L3 1h10l2.500 4v3M4 5.500c0 2.500 3 2.500 3 0"/><path d="M11.500 15c-2-2-2-5 .5-7.500 2 2.500 2 5.500-.5 7.500zM11 15c-3 0-4-2-4-4.500M12 15c3 0 4-2 4-4.500"/></svg></button>
    <button class="plain" aria-label="助手"><svg class="ic" viewBox="0 0 16 16"><path d="M5.500 13C-1 10 .5.500 8 .5S17 10 10.500 13v2.500h-5zM9 3.500L5 8.500h3V12l3.500-5H8.500z"/></svg></button>
    <button class="plain" aria-label="词典"><svg class="ic" viewBox="0 0 16 16"><path d="M8 14L.5 13V1.500L8 3l7.500-1.500V6M8 3v11"/><circle cx="12" cy="10.500" r="2.300"/><path d="M14.500 8v6h1.500"/></svg></button>
    <div class="mt-auto d-flex justify-content-center" style="border-top:1px solid var(--line);height:44px;padding-top:22px"><svg width="16" height="6" fill="none" stroke="#2f3750"><circle cx="2.500" cy="3" r="1.500"/><circle cx="8" cy="3" r="1.500"/><circle cx="13.500" cy="3" r="1.500"/></svg></div>
  </aside>
</main>

<footer class="status d-flex align-items-start flex-shrink-0">
  <div class="d-flex align-items-center text-nowrap">
    <span>页面: 3/12</span><i class="vsep" style="margin:0 10px 0 6px"></i>
    <span>节: 3/6</span><i class="vsep" style="margin:0 6px"></i>
    <span>列: 1</span><i class="vsep" style="margin:0 9px 0 12px"></i>
    <span>字数: 2873</span><i class="vsep" style="margin:0 9px 0 6px"></i>
    <button class="plain" style="gap:3px"><svg class="ic" viewBox="0 0 16 16"><use href="#chkbox"/><path d="M6 6l4 4M10 6l-4 4"/></svg>改写</button>
    <button class="plain" style="gap:3px;margin-left:18px"><svg class="ic" viewBox="0 0 16 16"><use href="#chkbox"/><path d="M6 6l4 4M10 6l-4 4"/></svg>修订</button>
    <button class="plain chk" style="gap:3px;margin-left:10px"><svg class="ic" viewBox="0 0 16 16"><use href="#chkbox"/><path d="M5 8l2.500 2.500L11.500 6"/></svg>拼写检查</button><i class="tri" style="margin-left:2px"></i><i class="vsep" style="margin:0 4px"></i>
    <button class="plain" style="gap:2px"><svg class="ic" viewBox="0 0 16 16"><path d="M4 14.500H.5v-13H6L8 3l2-1.500h5.500V7"/><circle cx="9" cy="8.500" r="3.500" fill="#dcdfe6"/><path d="M11.500 11l4 4"/></svg>内容检查<i class="tri ms-1"></i></button><i class="vsep" style="margin:0 18px 0 5px"></i>
    <button class="plain" style="gap:2px"><svg class="ic" viewBox="0 0 16 16"><path d="M.5 4V1.500h10V4M5.500 1.500v12M3.500 13.500h4M10 8c0-3 5-3 5 0 0 2-2.500 2-2.500 4.500M12.500 14v1.500"/></svg>缺失字体</button>
  </div>
  <div class="d-flex align-items-center ms-auto" style="height:18px">
    <button class="plain" aria-label="护眼"><svg class="ic" viewBox="0 0 16 16"><path d="M0 9.500c4-6 12-6 16 0-4 6-12 6-16 0zM8 3V.5M3 4L1.500 2M13 4l1.500-2"/><circle cx="8" cy="9.500" r="2.500"/></svg></button>
    <i class="vsep" style="margin:0 11px 0 13px"></i>
    <button class="plain sel" aria-label="页面视图"><svg class="ic" viewBox="0 0 16 16"><path d="M1.500 1.500h10l3 3v10h-13zM4 5.500h7M4 8.500h7M4 11.500h7"/></svg></button>
    <button class="plain ms-2" aria-label="大纲"><svg class="ic" viewBox="0 0 16 16"><path d="M0 2.500h2M4 2.500h11M4 6.500h2M7 6.500h8M4 10.500h2M7 10.500h8M0 14.500h2M4 14.500h11"/></svg></button>
    <button class="plain" style="margin-left:10px" aria-label="阅读"><svg class="ic" viewBox="0 0 16 16"><path d="M8 3.500L6 1.500H.5v12H6l2 2 2-2h5.500v-12H10zM8 3.500v12"/></svg></button>
    <button class="plain" style="margin-left:10px" aria-label="网页"><svg class="ic" viewBox="0 0 16 16"><circle cx="8" cy="8.500" r="7"/><ellipse cx="8" cy="8.500" rx="3.500" ry="7"/><path d="M1.500 6h13M1.500 11h13M8 1.500v14"/></svg></button>
    <button class="plain" style="margin-left:10px" aria-label="写作"><svg class="ic" viewBox="0 0 16 16"><path d="M1 14l3-7 7-6 4 3-7 7zM5 7l4 3M1 15.500h13"/></svg></button>
    <i class="vsep" style="margin:0 15px 0 14px"></i>
    <button class="plain" aria-label="适合窗口"><svg class="ic" viewBox="0 0 16 16"><path d="M1.500 5V1.500H5M11 1.500h3.500V5M14.500 11v3.500H11M5 14.500H1.500V11M4.500 4.500h7v7h-7z"/></svg></button>
    <button class="plain" style="margin-left:7px;gap:4px">80%<i class="tri"></i></button>
    <button class="plain" style="margin-left:12px" aria-label="缩小"><svg width="14" height="14"><path d="M2 7h10" stroke="#3b435b" stroke-width="2"/></svg></button>
    <input type="range" class="zoomer" style="margin:0 10px" min="0" max="100" value="38" aria-label="缩放">
    <button class="plain" aria-label="放大"><svg width="14" height="14"><path d="M2 7h10M7 2v10" stroke="#3b435b" stroke-width="2"/></svg></button>
    <button class="plain" style="margin-left:9px" aria-label="全屏"><svg class="ic" viewBox="0 0 16 16"><path d="M2 6V2h4M2 2l4 4M10 2h4v4M14 2l-4 4M14 10v4h-4M14 14l-4-4M6 14H2v-4M2 14l4-4"/></svg></button>
  </div>
</footer>

<div class="wmark d-flex align-items-center">
  <svg width="43" height="42" viewBox="0 0 43 42"><defs><linearGradient id="ga" x1="1" x2="0"><stop offset="0" stop-color="#53c3f0"/><stop offset="1" stop-color="#2f73cf"/></linearGradient><linearGradient id="gb" x1="1" x2="0"><stop offset="0" stop-color="#3cb878"/><stop offset="1" stop-color="#e4e24a"/></linearGradient></defs><path d="M42 1C24 0 2 8 1 25c0 3 1 6 3 8C2 20 20 8 42 1z" fill="url(#ga)"/><path d="M34 8C20 8 8 18 10 27c1 3 8 3 13-2-5 2-8 1-8-2 1-6 9-12 19-15z" fill="url(#ga)"/><path d="M36 15c8 3 7 14-2 20-8 5-20 6-30 3 9 1 18-2 23-6 6-5 8-11 0-11 2-4 5-6 9-6z" fill="url(#gb)"/></svg>
  <div class="text-nowrap"><div class="w1">极光下载站</div><div class="w2">www.xz7.com</div></div>
</div>
</body>
</html>
